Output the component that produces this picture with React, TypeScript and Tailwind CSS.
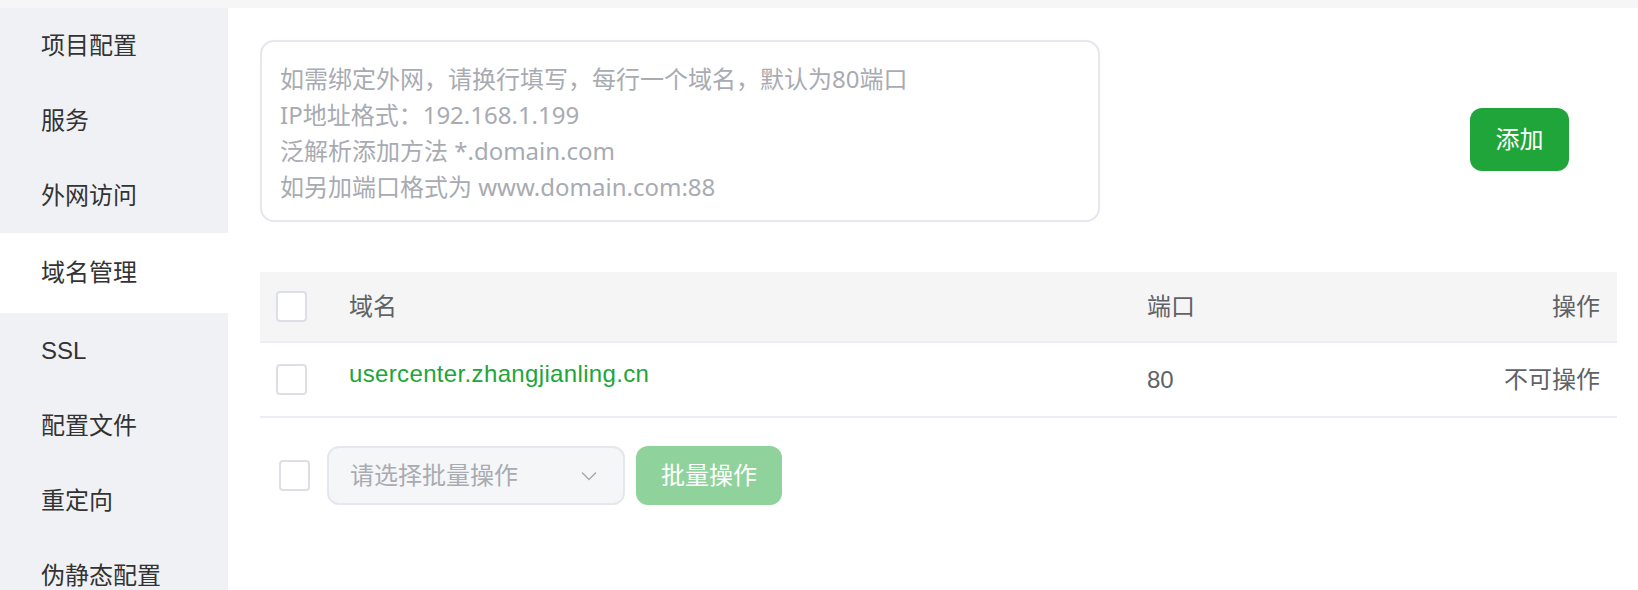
import { useState } from 'react';

const NAV = ['项目配置', '服务', '外网访问', '域名管理', 'SSL', '配置文件', '重定向', '伪静态配置'];
const ACTIVE = '域名管理';

const PLACEHOLDER =
  '如需绑定外网，请换行填写，每行一个域名，默认为80端口\nIP地址格式：192.168.1.199\n泛解析添加方法 *.domain.com\n如另加端口格式为 www.domain.com:88';

const DOMAINS = [{ name: 'usercenter.zhangjianling.cn', port: 80 }];

function Checkbox({ checked, onChange }: { checked?: boolean; onChange?: () => void }) {
  return (
    <button
      type="button"
      onClick={onChange}
      className={`h-[31px] w-[31px] shrink-0 rounded-[4px] border-2 ${
        checked ? 'border-[#20a53a] bg-[#20a53a]' : 'border-[#dcdfe6] bg-white'
      }`}
    />
  );
}

function Sidebar() {
  return (
    <div className="w-[228px] shrink-0 bg-[#f0f1f5]">
      {NAV.map((item) => {
        const active = item === ACTIVE;
        return (
          <div
            key={item}
            className={`flex items-center pl-[41px] text-[24px] text-[#333333] ${
              active ? 'h-[80px] bg-white' : 'h-[75px]'
            }`}
          >
            {item}
          </div>
        );
      })}
    </div>
  );
}

export default function App() {
  const [value, setValue] = useState('');
  const [picked, setPicked] = useState<string[]>([]);

  const toggle = (name: string) =>
    setPicked((p) => (p.includes(name) ? p.filter((n) => n !== name) : [...p, name]));

  return (
    <div className="h-[590px] w-[1638px] overflow-hidden bg-white font-['Liberation_Sans','Noto_Sans_CJK_SC',sans-serif]">
      <div className="h-[8px] bg-[#f6f6f7]" />
      <div className="flex h-[582px]">
        <Sidebar />

        <div className="flex-1 pl-[32px] pr-[21px] pt-[32px]">
          {/* domain input + add */}
          <div className="flex items-start">
            <textarea
              value={value}
              onChange={(e) => setValue(e.target.value)}
              placeholder={PLACEHOLDER}
              className="h-[182px] w-[840px] resize-none rounded-[14px] border-2 border-[#e4e7ed] px-[18px] py-[19px] font-['Noto_Sans','Noto_Sans_CJK_SC',sans-serif] text-[24px] leading-[36px] text-[#333333] outline-none placeholder:text-[#a8abb2]"
            />
            <button
              type="button"
              className="ml-[370px] mt-[68px] h-[63px] w-[99px] rounded-[12px] bg-[#20a53a] text-[24px] text-white"
            >
              添加
            </button>
          </div>

          {/* table */}
          <div className="mt-[50px]">
            <div className="flex h-[71px] items-center border-b-2 border-[#ebeef5] bg-[#f5f5f5] pl-[16px] pr-[17px] text-[24px] text-[#606266]">
              <Checkbox />
              <div className="ml-[42px] flex-1">域名</div>
              <div className="w-[300px]">端口</div>
              <div className="w-[153px] text-right">操作</div>
            </div>
            {DOMAINS.map((d) => (
              <div
                key={d.name}
                className="flex h-[75px] items-center border-b-2 border-[#ebeef5] pl-[16px] pr-[17px] text-[24px] text-[#606266]"
              >
                <Checkbox checked={picked.includes(d.name)} onChange={() => toggle(d.name)} />
                <div className="ml-[42px] flex-1 pb-[12px] tracking-[0.35px] text-[#20a53a]">{d.name}</div>
                <div className="w-[300px]">{d.port}</div>
                <div className="w-[153px] text-right">不可操作</div>
              </div>
            ))}
          </div>

          {/* batch bar */}
          <div className="mt-[28px] flex items-center pl-[19px]">
            <Checkbox />
            <div className="ml-[17px] flex h-[59px] w-[298px] items-center justify-between rounded-[12px] border-2 border-[#e4e7ed] bg-[#f5f6f8] pl-[21px] pr-[26px] text-[24px] text-[#a8abb2]">
              <span>请选择批量操作</span>
              <svg width="16" height="10" viewBox="0 0 16 10" fill="none">
                <path d="M1 1.5l7 7 7-7" stroke="#a8abb2" strokeWidth="1.5" />
              </svg>
            </div>
            <button
              type="button"
              disabled
              className="ml-[11px] h-[59px] w-[146px] rounded-[12px] bg-[#8fd29c] text-[24px] text-white"
            >
              批量操作
            </button>
          </div>
        </div>
      </div>
    </div>
  );
}
